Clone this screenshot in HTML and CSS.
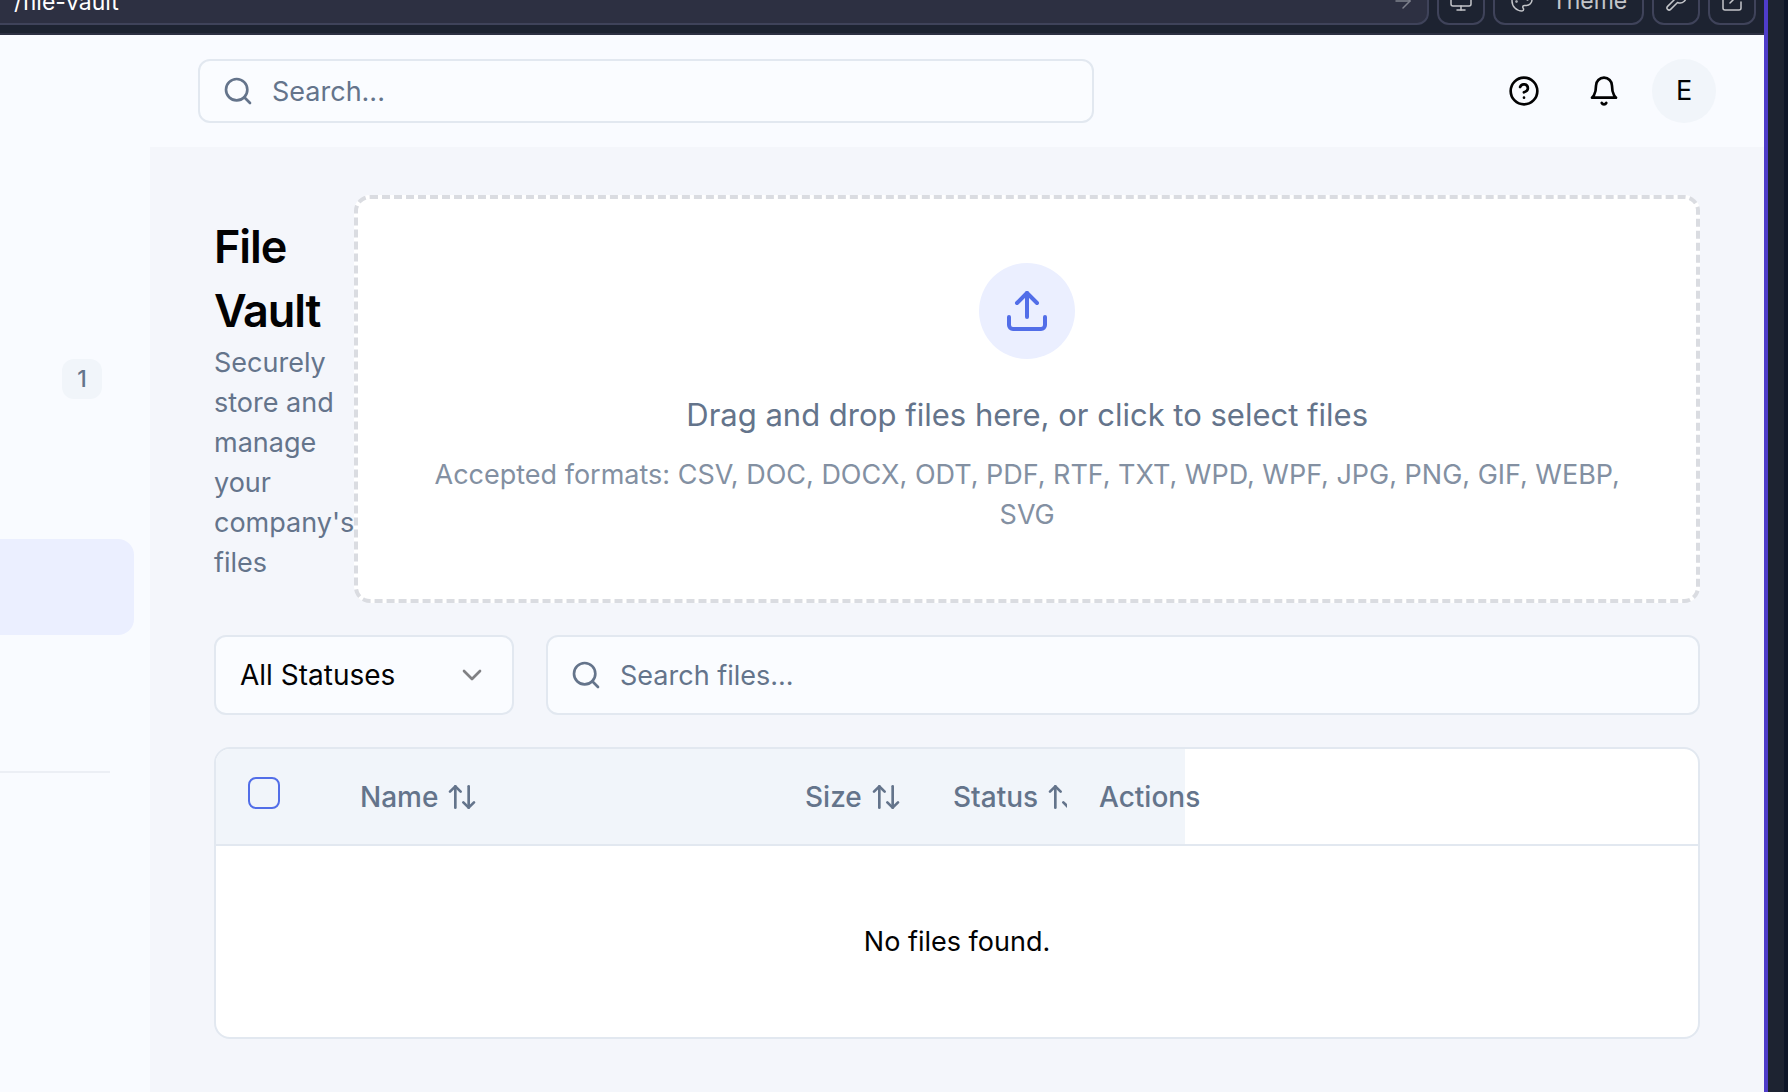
FILE: index.html
```html
<!DOCTYPE html>
<html lang="en">
<head>
<meta charset="utf-8">
<title>File Vault</title>
<link rel="stylesheet" href="styles.css">
</head>
<body>
<svg class="sprite" aria-hidden="true">
  <symbol id="search" viewBox="0 0 24 24"><circle cx="11" cy="11" r="8"/><path d="m21 21-4.3-4.3"/></symbol>
  <symbol id="sort" viewBox="0 0 24 24"><path d="m21 16-4 4-4-4"/><path d="M17 20V4"/><path d="m3 8 4-4 4 4"/><path d="M7 4v16"/></symbol>
</svg>
<div class="frame">
  <div class="toolbar">
    <div class="address">
      <input class="address-input" type="text" value="/file-vault" aria-label="Address">
      <button class="go" type="button" aria-label="Go"><svg class="icon-tool" viewBox="0 0 24 24"><path d="M5 12h14"/><path d="m12 5 7 7-7 7"/></svg></button>
    </div>
    <button class="tool" type="button" aria-label="Device"><svg class="icon-tool" viewBox="0 0 24 24"><rect x="2" y="3" width="20" height="14" rx="2"/><path d="M8 21h8"/><path d="M12 17v4"/></svg></button>
    <button class="tool tool-theme" type="button"><svg class="icon-tool" viewBox="0 0 24 24"><path d="M12 2C6.5 2 2 6.500 2 12s4.500 10 10 10c.926 0 1.648-.746 1.648-1.688 0-.437-.18-.835-.437-1.125-.29-.289-.438-.652-.438-1.125a1.640 1.640 0 0 1 1.668-1.668h1.996c3.051 0 5.555-2.503 5.555-5.554C21.965 6.012 17.461 2 12 2z"/><circle cx="6.500" cy="12.500" r=".5"/><circle cx="8.500" cy="7.500" r=".5"/><circle cx="13.500" cy="6.500" r=".5"/><circle cx="17.500" cy="10.500" r=".5"/></svg>Theme</button>
    <button class="tool" type="button" aria-label="Tools"><svg class="icon-tool" viewBox="0 0 24 24"><path d="M14.700 6.300a1 1 0 0 0 0 1.400l1.600 1.600a1 1 0 0 0 1.400 0l3.770-3.770a6 6 0 0 1-7.940 7.940l-6.910 6.910a2.120 2.120 0 0 1-3-3l6.910-6.910a6 6 0 0 1 7.940-7.940l-3.760 3.760z"/></svg></button>
    <button class="tool" type="button" aria-label="Open in new tab"><svg class="icon-tool" viewBox="0 0 24 24"><path d="M15 3h6v6"/><path d="M10 14 21 3"/><path d="M21 13v6a2 2 0 0 1-2 2H5a2 2 0 0 1-2-2V5a2 2 0 0 1 2-2h6"/></svg></button>
  </div>

  <div class="app">
    <nav class="sidebar" aria-label="Main">
      <span class="badge">1</span>
      <a class="nav-active" href="#" aria-label="File Vault" aria-current="page"></a>
      <hr class="divider">
    </nav>

    <div class="page">
      <header class="header">
        <label class="field header-search">
          <svg class="icon"><use href="#search"/></svg>
          <input class="field-input" type="search" placeholder="Search..." aria-label="Search">
        </label>
        <div class="header-actions">
          <button class="round" type="button" aria-label="Help"><svg class="icon" viewBox="0 0 24 24"><circle cx="12" cy="12" r="10"/><path d="M9.090 9a3 3 0 0 1 5.830 1c0 2-3 3-3 3"/><path d="M12 17h.01"/></svg></button>
          <button class="round" type="button" aria-label="Notifications"><svg class="icon" viewBox="0 0 24 24"><path d="M6 8a6 6 0 0 1 12 0c0 7 3 9 3 9H3s3-2 3-9"/><path d="M10.300 21a1.940 1.940 0 0 0 3.400 0"/></svg></button>
          <button class="round avatar" type="button">E</button>
        </div>
      </header>

      <main class="content">
        <section class="intro">
          <div>
            <h1 class="title">File Vault</h1>
            <p class="subtitle">Securely store and manage your company's files</p>
          </div>
          <button class="dropzone" type="button">
            <span class="upload"><svg class="icon-upload" viewBox="0 0 24 24"><path d="M21 15v4a2 2 0 0 1-2 2H5a2 2 0 0 1-2-2v-4"/><path d="m17 8-5-5-5 5"/><path d="M12 3v12"/></svg></span>
            <span class="drop-text">Drag and drop files here, or click to select files</span>
            <span class="drop-formats">Accepted formats: CSV, DOC, DOCX, ODT, PDF, RTF, TXT, WPD, WPF, JPG, PNG, GIF, WEBP, SVG</span>
          </button>
        </section>

        <section class="filters">
          <div class="select-wrap">
            <select class="select" aria-label="Status"><option>All Statuses</option></select>
            <svg class="icon chevron" viewBox="0 0 24 24"><path d="m6 9 6 6 6-6"/></svg>
          </div>
          <label class="field files-search">
            <svg class="icon"><use href="#search"/></svg>
            <input class="field-input" type="search" placeholder="Search files..." aria-label="Search files">
          </label>
        </section>

        <div class="card">
          <table class="files">
            <colgroup><col class="col-check"><col class="col-name"><col class="col-size"><col class="col-status"><col class="col-actions"><col></colgroup>
            <thead>
              <tr>
                <th><input class="check" type="checkbox" aria-label="Select all"></th>
                <th><button class="sort" type="button">Name<svg class="icon"><use href="#sort"/></svg></button></th>
                <th><button class="sort" type="button">Size<svg class="icon"><use href="#sort"/></svg></button></th>
                <th class="clipped"><button class="sort" type="button">Status<svg class="icon"><use href="#sort"/></svg></button></th>
                <th>Actions</th>
                <td class="rest"></td>
              </tr>
            </thead>
            <tbody>
              <tr><td class="empty" colspan="6">No files found.</td></tr>
            </tbody>
          </table>
        </div>
      </main>
    </div>
  </div>
</div>
</body>
</html>
```
FILE: styles.css
```css
* { box-sizing: border-box; }

body {
  margin: 0;
  background: linear-gradient(to left, #0e1628 4px, #1d2331 4px);
  color: #020203;
  font: 400 27px/40px Inter, "Liberation Sans", sans-serif;
}

button, input, select {
  margin: 0;
  padding: 0;
  border: 0;
  background: none;
  color: inherit;
  font: inherit;
}

.sprite { display: none; }

.icon, .icon-tool, .icon-upload {
  flex: none;
  width: 32px;
  height: 32px;
  fill: none;
  stroke: currentColor;
  stroke-width: 2;
  stroke-linecap: round;
  stroke-linejoin: round;
}

.frame {
  display: flex;
  flex-direction: column;
  min-height: 100vh;
  margin-right: 20px;
  border-right: 4px solid #4f3cc9;
}

/* Preview toolbar */
.toolbar {
  display: flex;
  align-items: flex-end;
  gap: 8px;
  height: 35px;
  padding: 0 8px 8px 0;
  overflow: hidden;
  border-bottom: 2px solid #2d3042;
  background: #1d2331;
  color: #c3c5c9;
  font-size: 23px;
}

.address {
  display: flex;
  flex: 1;
  align-items: center;
  height: 48px;
  padding: 0 12px 0 14px;
  border: 2px solid #3f435a;
  border-left: 0;
  border-radius: 0 12px 12px 0;
  background: #2d3042;
}

.address-input { flex: 1; min-width: 0; padding-top: 2px; color: #fff; }

.go { display: flex; color: #7e818c; }

.tool {
  display: flex;
  flex: none;
  align-items: center;
  justify-content: center;
  gap: 18px;
  width: 48px;
  height: 48px;
  border: 2px solid #3f435a;
  border-radius: 12px;
}

.tool-theme { width: 151px; }

.icon-tool { width: 24px; height: 24px; stroke-width: 1.5; }

/* Shell */
.app { display: flex; flex: 1; background: #f9fbff; }

.sidebar { flex: none; width: 150px; padding-top: 324px; }

.badge {
  display: block;
  width: 40px;
  margin-left: 62px;
  border-radius: 12px;
  background: #f1f5fa;
  color: #64748b;
  font-size: 23px;
  font-weight: 500;
  text-align: center;
}

.nav-active {
  display: block;
  height: 96px;
  margin: 140px 16px 0 0;
  border-radius: 0 16px 16px 0;
  background: #ebefff;
}

.divider {
  height: 2px;
  margin: 136px 40px 0 0;
  border: 0;
  background: #eceff5;
}

.page { flex: 1; min-width: 0; display: flex; flex-direction: column; }

.header {
  display: flex;
  align-items: center;
  justify-content: space-between;
  height: 112px;
  padding: 0 48px;
}

.field {
  display: flex;
  align-items: center;
  gap: 18px;
  padding: 0 22px;
  border: 2px solid #e2e8f0;
  border-radius: 12px;
  background: #fafcff;
  color: #64748b;
}

.field-input { flex: 1; min-width: 0; padding-top: 2px; outline: 0; }
.field-input::placeholder { color: #64748b; opacity: 1; }

.header-search { flex: 0 1 896px; height: 64px; }

.header-actions { display: flex; gap: 16px; }

.round {
  display: flex;
  align-items: center;
  justify-content: center;
  width: 64px;
  height: 64px;
  border-radius: 50%;
}

.avatar { background: #f1f5fa; }

/* Content */
.content {
  display: flex;
  flex: 1;
  flex-direction: column;
  gap: 32px;
  padding: 48px 64px;
  background: #f4f6fb;
}

.intro {
  display: grid;
  grid-template-columns: min-content 1fr;
  align-items: center;
}

.title {
  margin: 0;
  font-size: 45px;
  font-weight: 600;
  line-height: 64px;
  letter-spacing: -0.025em;
}

.subtitle { margin: 0; color: #64748b; }

.dropzone {
  display: flex;
  flex-direction: column;
  align-items: center;
  padding: 64px;
  border: 4px dashed #dadce1;
  border-radius: 16px;
  background: #fff;
  color: #64748b;
}

.upload {
  display: flex;
  align-items: center;
  justify-content: center;
  width: 96px;
  height: 96px;
  margin-bottom: 32px;
  border-radius: 50%;
  background: #ebefff;
  color: #526ee8;
}

.icon-upload { width: 48px; height: 48px; }

.drop-text { margin-bottom: 16px; font-size: 31px; line-height: 48px; }

.drop-formats { color: #8390a2; }

.filters { display: flex; gap: 32px; }

.select-wrap { position: relative; flex: none; width: 300px; }

.select {
  width: 100%;
  height: 80px;
  padding: 0 24px;
  border: 2px solid #e2e8f0;
  border-radius: 12px;
  background: #fafcff;
  font-size: 28px;
  appearance: none;
}

.chevron {
  position: absolute;
  top: 24px;
  right: 26px;
  color: #808184;
  pointer-events: none;
}

.files-search { flex: 1; height: 80px; }

.card {
  overflow: hidden;
  border: 2px solid #e2e8f0;
  border-radius: 16px;
  background: #fff;
}

.files {
  width: 100%;
  border-spacing: 0;
  table-layout: fixed;
}

.col-check { width: 112px; }
.col-name { width: 445px; }
.col-size { width: 148px; }
.col-status { width: 146px; }
.col-actions { width: 118px; }

.files th {
  height: 97px;
  padding: 0 0 0 32px;
  border-bottom: 2px solid #e2e8f0;
  background: #f1f5fa;
  color: #64748b;
  font-size: 28px;
  font-weight: 500;
  text-align: left;
}

.files .clipped { overflow: hidden; }

.rest { padding: 0; border-bottom: 2px solid #e2e8f0; }

.sort { display: flex; align-items: center; gap: 8px; }

.check {
  display: block;
  width: 32px;
  height: 32px;
  margin-bottom: 8px;
  border: 2px solid #526ee8;
  border-radius: 8px;
  appearance: none;
}

.empty { height: 191px; padding: 0; text-align: center; }
```
